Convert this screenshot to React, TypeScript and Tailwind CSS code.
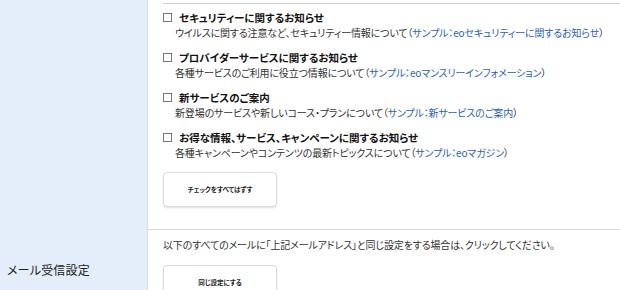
import React from 'react'

const items = [
  {
    title: 'セキュリティーに関するお知らせ',
    desc: 'ウイルスに関する注意など、セキュリティー情報について',
    link: 'サンプル：eoセキュリティーに関するお知らせ',
  },
  {
    title: 'プロバイダーサービスに関するお知らせ',
    desc: '各種サービスのご利用に役立つ情報について',
    link: 'サンプル：eoマンスリーインフォメーション',
  },
  {
    title: '新サービスのご案内',
    desc: '新登場のサービスや新しいコース・プランについて',
    link: 'サンプル：新サービスのご案内',
  },
  {
    title: 'お得な情報、サービス、キャンペーンに関するお知らせ',
    desc: '各種キャンペーンやコンテンツの最新トピックスについて',
    link: 'サンプル：eoマガジン',
  },
]

const font = "font-['Noto_Sans_CJK_JP','Noto_Sans',sans-serif] [font-feature-settings:'palt']"

export default function App() {
  return (
    <div className={`w-[620px] h-[290px] overflow-hidden bg-white flex ${font} text-[#333]`}>
      {/* left label column */}
      <div className="w-[148px] shrink-0 bg-[#e4eefa] border-r border-[#d6dde6] flex flex-col">
        <div className="h-[230px] shrink-0" />
        <div className="pl-[7px] pt-[32px] text-[12px] tracking-[0.2px] leading-[16px] text-[#222]">メール受信設定</div>
      </div>

      <div className="flex-1 flex flex-col">
        <div className="h-[230px] shrink-0 border-b border-[#d9d9d9] pl-[15px]">
          <div className="mt-[3px] border-t border-[#cfcfcf]" />
          <ul className="pt-[6px] flex flex-col gap-[10px]">
            {items.map(item => (
              <li key={item.title} className="flex flex-col">
                <label className="flex items-center h-[15px]">
                  <span className="w-[9px] h-[9px] border border-[#777] bg-white mr-[7px]" />
                  <span className="text-[10.5px] font-bold text-[#111] leading-[15px]">{item.title}</span>
                </label>
                <p className="pl-[12px] text-[10px] tracking-[-0.15px] leading-[15px] whitespace-nowrap">
                  {item.desc}（<span className="text-[#2b5fc4]">{item.link}</span>）
                </p>
              </li>
            ))}
          </ul>
          <button className="mt-[12px] w-[114px] h-[35px] rounded-[4px] border border-[#dcdcdc] bg-white shadow-[0_1px_2px_rgba(0,0,0,0.12)] text-[6.5px] font-bold text-[#222]">
            チェックをすべてはずす
          </button>
        </div>

        <div className="pl-[15px] pt-[7px]">
          <p className="text-[10px] tracking-[-0.15px] leading-[15px] text-[#333] whitespace-nowrap">
            以下のすべてのメールに「上記メールアドレス」と同じ設定をする場合は、クリックしてください。
          </p>
          <button className="mt-[13px] w-[114px] h-[35px] rounded-[4px] border border-[#dcdcdc] bg-white shadow-[0_1px_2px_rgba(0,0,0,0.12)] text-[6.5px] font-bold text-[#222]">
            同じ設定にする
          </button>
        </div>
      </div>
    </div>
  )
}
